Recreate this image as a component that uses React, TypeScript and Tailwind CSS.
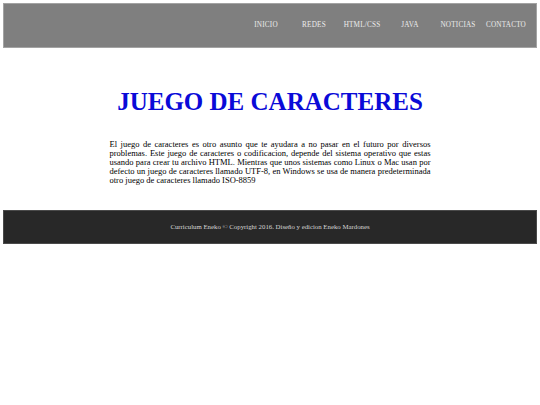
import React from "react";

const serif = { fontFamily: '"Liberation Serif", "Times New Roman", serif' };

export default function App() {
  const items = ["INICIO", "REDES", "HTML/CSS", "JAVA", "NOTICIAS", "CONTACTO"];
  return (
    <div className="w-[540px] h-[405px] bg-white pt-[3px] px-[3px]" style={serif}>
      <header className="h-[45px] bg-[#7f7f7f] border border-[#a3a3a3] flex items-center justify-end pr-[6px]">
        <ul className="flex">
          {items.map((t) => (
            <li key={t} className="w-[48px] text-center text-[7.2px] tracking-[0.2px] text-[#ececec]">
              {t}
            </li>
          ))}
        </ul>
      </header>
      <h1 className="mt-[41px] text-center text-[25px] font-bold leading-none text-[#0a0ad8]">
        JUEGO DE CARACTERES
      </h1>
      <p className="mt-[26px] mx-auto w-[321px] text-justify text-[8.5px] leading-[9px] text-black">
        El juego de caracteres es otro asunto que te ayudara a no pasar en el futuro por diversos
        problemas. Este juego de caracteres o codificacion, depende del sistema operativo que estas
        usando para crear tu archivo HTML. Mientras que unos sistemas como Linux o Mac usan por
        defecto un juego de caracteres llamado UTF-8, en Windows se usa de manera predeterminada
        otro juego de caracteres llamado ISO-8859
      </p>
      <footer className="mt-[25px] h-[34px] bg-[#282828] border border-[#4a4a4a] flex items-center justify-center">
        <span className="text-[6.8px] text-[#d6d6d6]">
          Curriculum Eneko © Copyright 2016. Diseño y edicion Eneko Mardones
        </span>
      </footer>
    </div>
  );
}
